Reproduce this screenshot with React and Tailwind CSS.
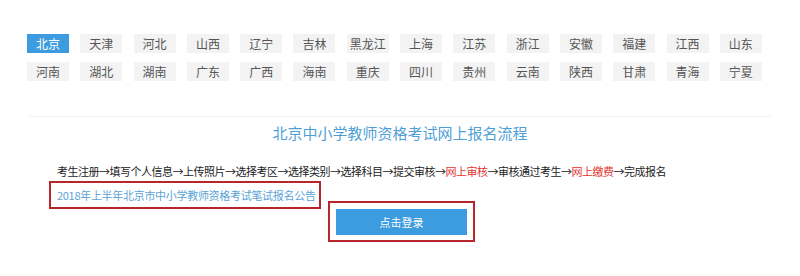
import React from "react";

const row1 = ["北京", "天津", "河北", "山西", "辽宁", "吉林", "黑龙江", "上海", "江苏", "浙江", "安徽", "福建", "江西", "山东"];
const row2 = ["河南", "湖北", "湖南", "广东", "广西", "海南", "重庆", "四川", "贵州", "云南", "陕西", "甘肃", "青海", "宁夏"];

function Region({ name, active }) {
  return (
    <div
      className={
        "w-[42px] h-[19px] flex items-center justify-center text-[12px] leading-none " +
        (active ? "bg-[#3d9be0] text-white" : "bg-[#f3f3f3] text-[#555]")
      }
    >
      {name}
    </div>
  );
}

export default function App() {
  return (
    <div
      className="w-[800px] h-[276px] bg-white overflow-hidden"
      style={{ fontFamily: '"Noto Sans CJK SC", "Noto Sans", sans-serif' }}
    >
      {/* 省份选择 */}
      <div className="pt-[34px] pl-[27px] flex flex-col gap-[9px]">
        <div className="flex gap-[11.3px]">
          {row1.map((n, i) => (
            <Region key={n} name={n} active={i === 0} />
          ))}
        </div>
        <div className="flex gap-[11.3px]">
          {row2.map((n) => (
            <Region key={n} name={n} />
          ))}
        </div>
      </div>

      <div className="mt-[35px] mx-[28px] border-t border-[#f3f3f3]" />

      <h2 className="mt-[6px] text-center text-[15px] leading-[20px] text-[#4f9fd6] font-normal">
        北京中小学教师资格考试网上报名流程
      </h2>

      <div className="mt-[20px] pl-[57px] text-[11px] leading-[16px] text-[#222] tracking-[-0.5px]">
        考生注册→填写个人信息→上传照片→选择考区→选择类别→选择科目→提交审核→
        <span className="text-[#e3342f]">网上审核</span>→审核通过考生→
        <span className="text-[#e3342f]">网上缴费</span>→完成报名
      </div>

      <div className="mt-[2px] pl-[49px]">
        <div className="inline-flex items-center h-[28px] border-2 border-[#b8262b] pl-[6px] pr-[3px] text-[11px] tracking-[-0.3px] text-[#5aa3d6]">
          2018年上半年北京市中小学教师资格考试笔试报名公告
        </div>
      </div>

      <div className="-mt-[8px] flex justify-center">
        <div className="ml-[3px] border-2 border-[#b8262b] pt-[6px] pb-[5px] px-[6px]">
          <button className="w-[131px] h-[26px] bg-[#3d9be0] text-white text-[11px] flex items-center justify-center">
            点击登录
          </button>
        </div>
      </div>
    </div>
  );
}
